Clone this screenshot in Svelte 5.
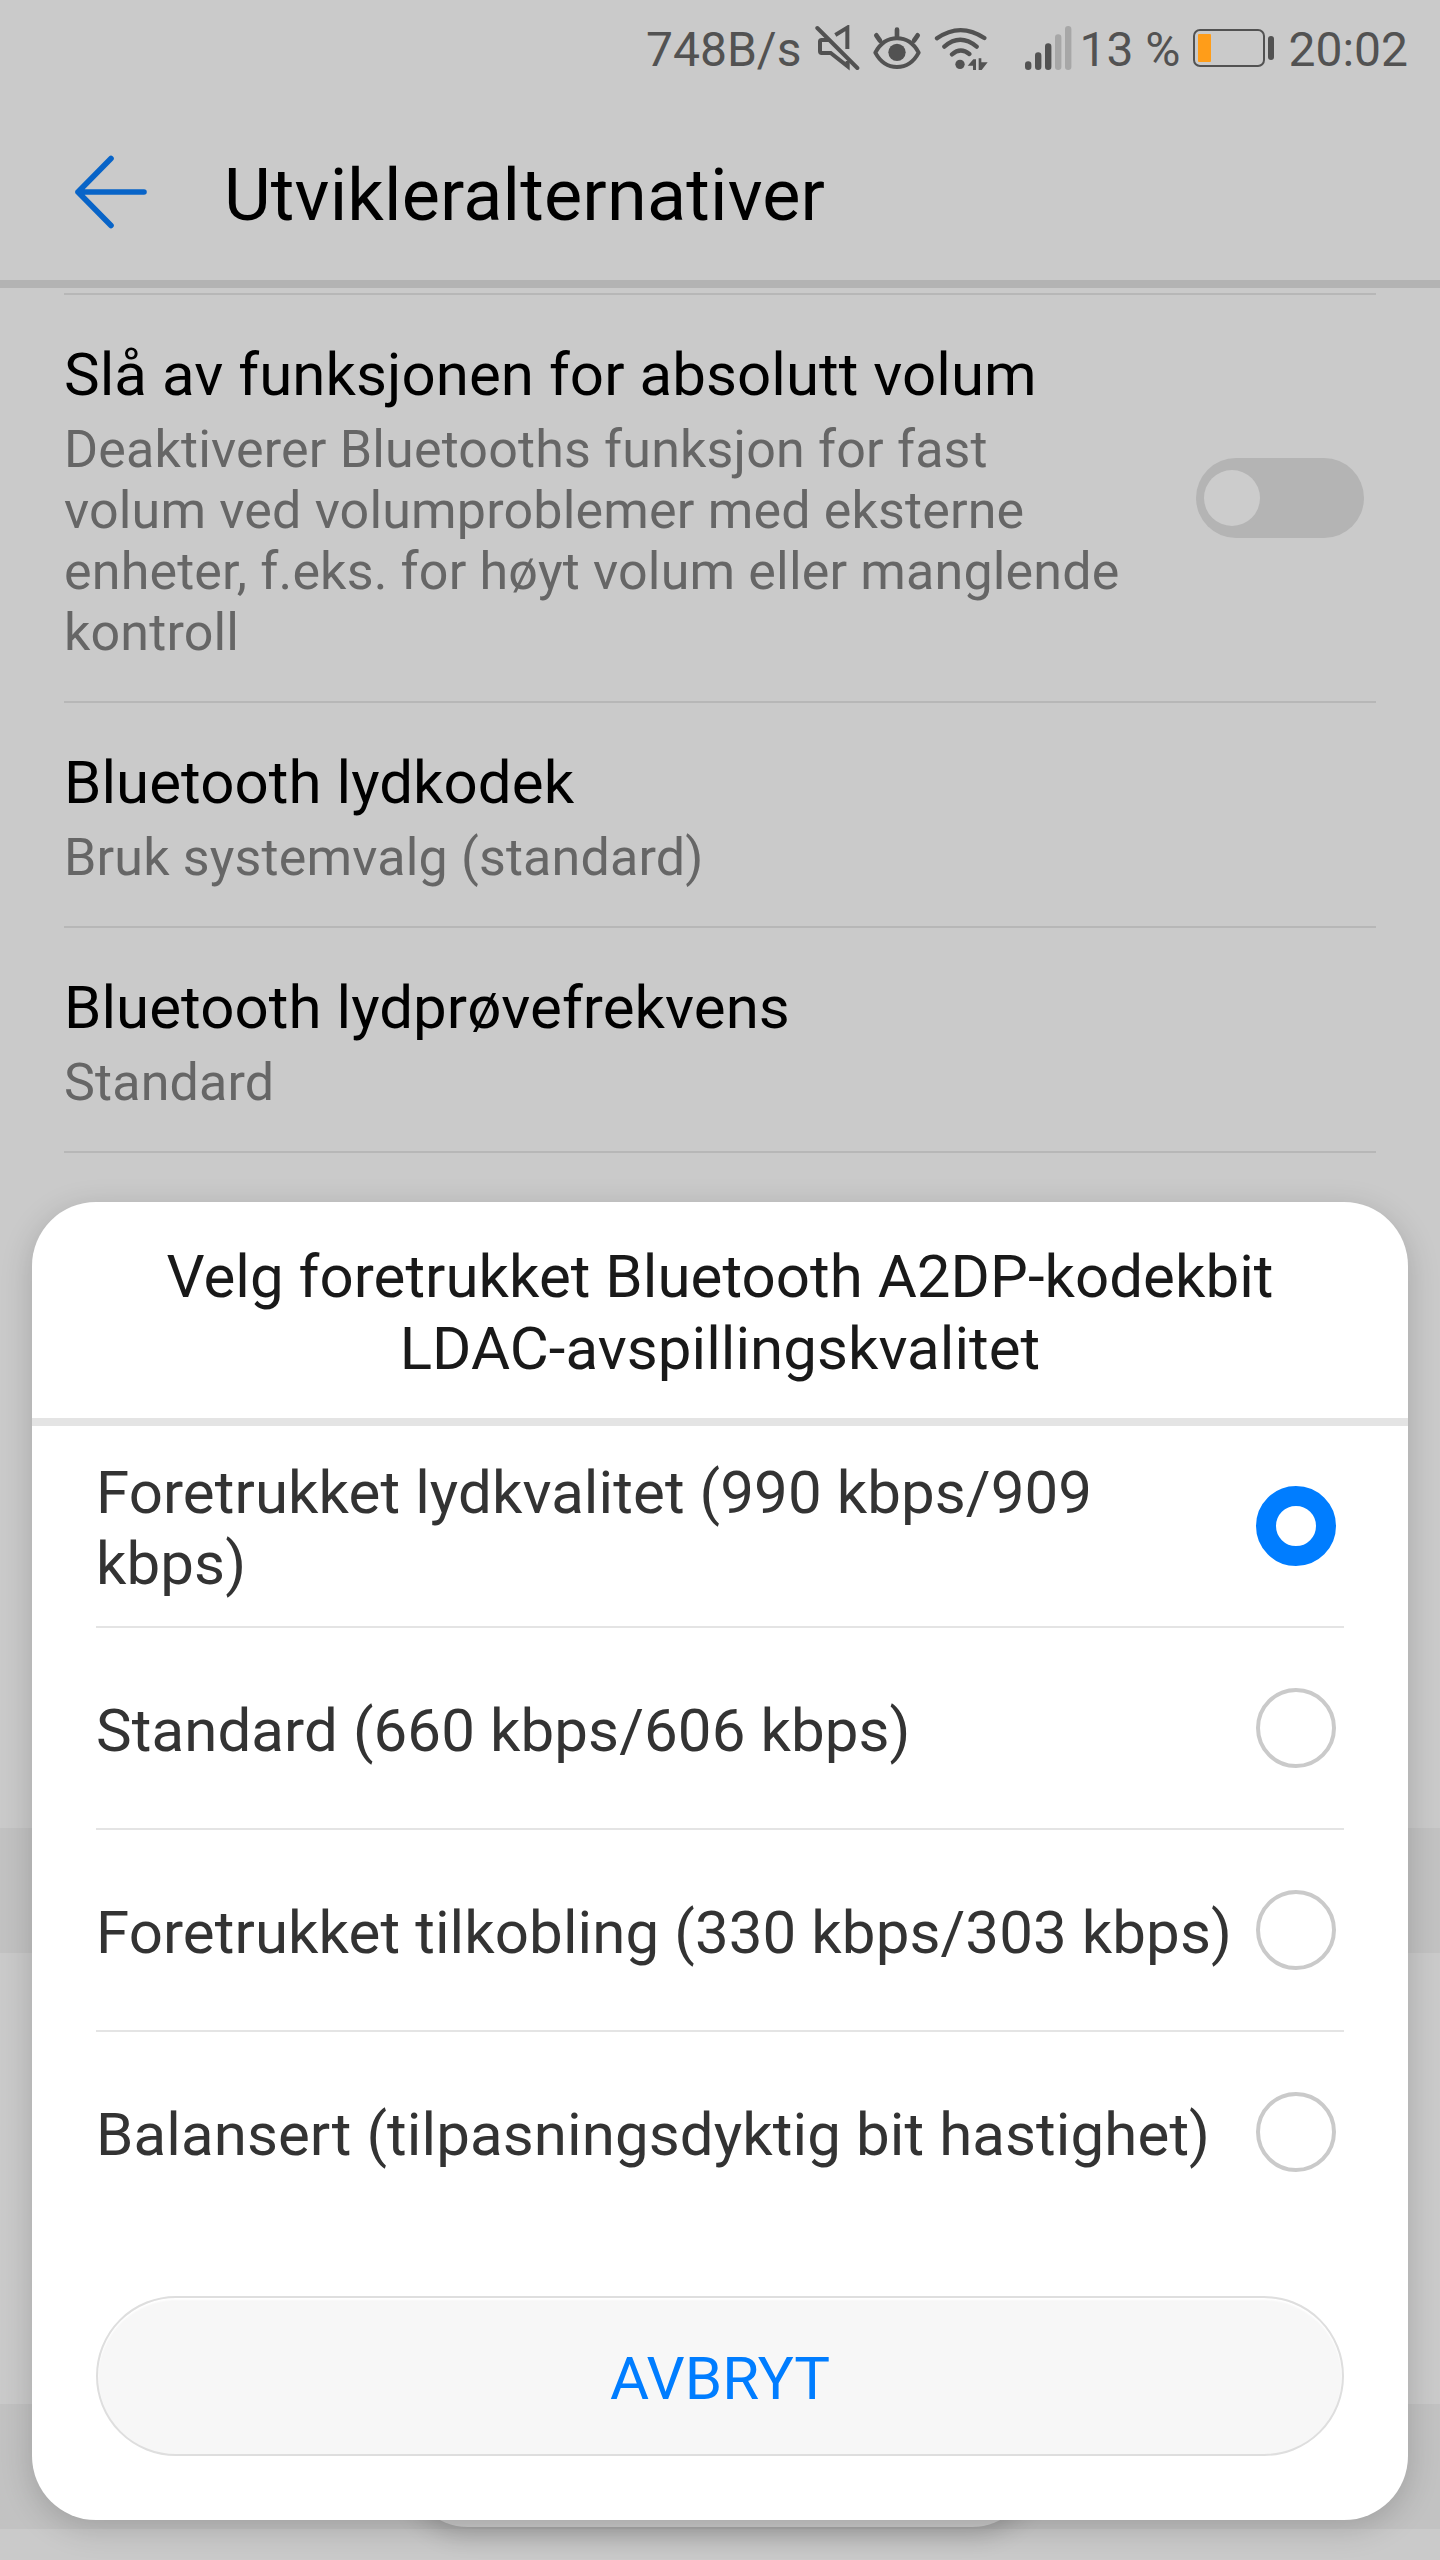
<script lang="ts">
	interface Setting {
		title: string;
		summary: string;
		toggle?: boolean;
	}

	const settings: Setting[] = [
		{
			title: 'Slå av funksjonen for absolutt volum',
			summary:
				'Deaktiverer Bluetooths funksjon for fast volum ved volumproblemer med eksterne enheter, f.eks. for høyt volum eller manglende kontroll',
			toggle: true
		},
		{ title: 'Bluetooth lydkodek', summary: 'Bruk systemvalg (standard)' },
		{ title: 'Bluetooth lydprøvefrekvens', summary: 'Standard' }
	];

	const options: string[] = [
		'Foretrukket lydkvalitet (990 kbps/909 kbps)',
		'Standard (660 kbps/606 kbps)',
		'Foretrukket tilkobling (330 kbps/303 kbps)',
		'Balansert (tilpasningsdyktig bit hastighet)'
	];

	let selected = 0;
	let absoluteVolumeOff = false;
</script>

<div class="screen">
	<div class="status-bar">
		<span class="speed">748B/s</span>
		<svg class="mute" width="46" height="46" viewBox="0 0 138 138" fill="none" stroke="#525252" stroke-width="12">
			<path d="M48 45H23q-5 0-5 5v29q0 5 5 5h27l51 40V108" />
			<path d="M64 30 100 8V72" />
			<path d="M10 9 130 129" stroke-linecap="round" />
		</svg>
		<svg class="eye" width="48" height="44" viewBox="0 0 144 132" fill="none" stroke="#525252" stroke-width="12" stroke-linecap="round">
			<path d="M7 80Q30 37 72 37T137 80Q114 123 72 123T7 80Z" stroke-linejoin="round" />
			<circle cx="72" cy="79" r="26" fill="#525252" stroke="none" />
			<path d="M72 11V32M10 28 21 44M134 28 123 44" stroke-width="14" />
		</svg>
		<svg class="wifi" width="54" height="44" viewBox="0 0 162 132" fill="none" stroke="#525252" stroke-width="13" stroke-linecap="round">
			<path d="M9 37Q78-12 151 36M31 62Q78 21 128 62M54 85Q80 63 106 84" />
			<circle cx="78" cy="115" r="14" fill="#525252" stroke="none" />
			<path d="M101 119 118 100H126V132H117V119ZM134 97H142V109H161L143 132H134Z" fill="#525252" stroke="none" />
		</svg>
		<svg class="signal" width="48" height="44" viewBox="0 0 48 44" stroke-width="6.4" stroke-linecap="round">
			<path d="M4.2 38.5V40.8M14.2 29.5V40.8M24.2 20.5V40.8" stroke="#525252" />
			<path d="M34.2 11.5V40.8M44.2 3.2V40.8" stroke="#a7a7a7" />
		</svg>
		<span class="percent">13 %</span>
		<div class="battery"><div class="level"></div></div>
		<div class="battery-tip"></div>
		<span class="clock">20:02</span>
	</div>

	<header class="app-bar">
		<svg width="74" height="74" viewBox="0 0 74 74" fill="none" stroke="#0864c8" stroke-width="5.6" stroke-linecap="round" stroke-linejoin="round">
			<path d="M37 3.5 4 37 37 70.5M4 37H70" />
		</svg>
		<h1>Utvikleralternativer</h1>
	</header>

	<main class="settings">
		{#each settings as setting}
			<section class="setting">
				<div class="text">
					<h2>{setting.title}</h2>
					<p>{setting.summary}</p>
				</div>
				{#if setting.toggle}
					<button
						class="toggle"
						class:on={absoluteVolumeOff}
						aria-label={setting.title}
						on:click={() => (absoluteVolumeOff = !absoluteVolumeOff)}
					>
						<span class="knob"></span>
					</button>
				{/if}
			</section>
		{/each}
	</main>

	<div class="backdrop">
		<div class="band"></div>
		<div class="gap"></div>
		<div class="band"></div>
	</div>
	<div class="toast"></div>

	<div class="dialog" role="dialog" aria-labelledby="dialog-title">
		<h2 class="dialog-title" id="dialog-title">Velg foretrukket Bluetooth A2DP-kodekbit LDAC-avspillingskvalitet</h2>
		<div class="options">
			{#each options as option, i}
				<button class="option" on:click={() => (selected = i)}>
					<span class="label">{option}</span>
					<span class="radio" class:checked={selected === i}></span>
				</button>
			{/each}
		</div>
		<button class="cancel">AVBRYT</button>
	</div>
</div>

<style>
	:global(body) {
		margin: 0;
	}

	.screen {
		position: relative;
		width: 1440px;
		height: 2560px;
		overflow: hidden;
		background: #cacaca;
		font-family: Roboto, sans-serif;
		color: #000;
	}

	h1,
	h2,
	p {
		margin: 0;
		font-weight: 400;
	}

	button {
		border: none;
		padding: 0;
		font-family: inherit;
	}

	.status-bar {
		display: flex;
		align-items: center;
		justify-content: flex-end;
		box-sizing: border-box;
		height: 96px;
		padding-right: 32px;
		font-size: 48px;
		color: #525252;
		white-space: nowrap;
	}

	.status-bar span {
		padding-top: 3px;
	}

	.status-bar svg {
		flex-shrink: 0;
	}

	.mute {
		margin-left: 13px;
	}

	.eye {
		margin-left: 13px;
	}

	.wifi {
		margin-left: 13px;
	}

	.signal {
		margin-left: 36px;
	}

	.percent {
		margin-left: 7px;
	}

	.battery {
		box-sizing: border-box;
		width: 72px;
		height: 38px;
		margin-left: 13px;
		padding: 3px;
		border: 2px solid #525252;
		border-radius: 7px;
	}

	.level {
		width: 13px;
		height: 28px;
		border-radius: 1px;
		background: #ff9d19;
	}

	.battery-tip {
		width: 6px;
		height: 24px;
		margin: 0 14px 0 3px;
		border-radius: 3px;
		background: #525252;
	}

	.app-bar {
		display: flex;
		align-items: center;
		box-sizing: border-box;
		height: 192px;
		padding: 7px 0 0 74px;
		border-bottom: 8px solid #b3b3b3;
	}

	h1 {
		margin: 8px 0 0 76px;
		font-size: 72px;
		letter-spacing: 0.18px;
	}

	.settings {
		margin: 5px 64px 0;
		border-top: 2px solid #b7b7b7;
	}

	.setting {
		display: flex;
		align-items: center;
		justify-content: space-between;
		padding-right: 12px;
		border-bottom: 2px solid #b7b7b7;
	}

	.text {
		width: 1070px;
		padding: 45px 0 38px;
	}

	.setting h2 {
		font-size: 60px;
		line-height: 70px;
		letter-spacing: 0.06px;
		white-space: nowrap;
	}

	.setting p {
		margin-top: 9px;
		font-size: 52px;
		line-height: 61px;
		letter-spacing: 0.17px;
		color: #666;
	}

	.toggle {
		box-sizing: border-box;
		width: 168px;
		height: 80px;
		padding: 0 8px;
		border-radius: 40px;
		background: #b4b4b4;
		text-align: left;
	}

	.toggle.on {
		text-align: right;
	}

	.knob {
		display: inline-block;
		width: 56px;
		height: 56px;
		border-radius: 50%;
		background: #cccccc;
		vertical-align: middle;
	}

	/* list content that continues behind the dialog */
	.backdrop {
		position: absolute;
		top: 1828px;
		left: 0;
		right: 0;
	}

	.band {
		height: 125px;
		background: #c2c2c2;
	}

	.gap {
		height: 451px;
	}

	.toast {
		position: absolute;
		left: 408px;
		top: 2407px;
		width: 624px;
		height: 120px;
		border-radius: 60px;
		background: #cacaca;
		box-shadow: 0 8px 24px rgba(0, 0, 0, 0.18);
	}

	.dialog {
		position: absolute;
		left: 32px;
		top: 1202px;
		box-sizing: border-box;
		width: 1376px;
		height: 1318px;
		border-radius: 64px;
		background: #fff;
		box-shadow: 0 8px 32px rgba(0, 0, 0, 0.18);
	}

	.dialog-title {
		box-sizing: border-box;
		height: 224px;
		padding: 39px 64px 0;
		border-bottom: 8px solid #e4e4e4;
		font-size: 60px;
		line-height: 72px;
		letter-spacing: 0.04px;
		text-align: center;
		color: #191919;
	}

	.options {
		margin: 0 64px;
	}

	.option {
		display: flex;
		align-items: center;
		justify-content: space-between;
		box-sizing: border-box;
		width: 100%;
		height: 202px;
		padding-right: 8px;
		border-bottom: 2px solid #e4e4e4;
		background: none;
		font-size: 60px;
		line-height: 71px;
		letter-spacing: 0.1px;
		text-align: left;
		color: #333;
	}

	.option:last-child {
		border-bottom-color: transparent;
	}

	.label {
		width: 1140px;
		padding-top: 4px;
	}

	.radio {
		flex-shrink: 0;
		box-sizing: border-box;
		width: 80px;
		height: 80px;
		border: 4px solid #cacaca;
		border-radius: 50%;
	}

	.radio.checked {
		border: 20px solid #007dff;
	}

	.cancel {
		display: block;
		box-sizing: border-box;
		width: 1248px;
		height: 160px;
		margin: 62px 64px 0;
		padding-top: 4px;
		border: 2px solid #dedede;
		border-radius: 80px;
		background: #f7f7f7;
		box-shadow: inset 0 2px 2px #fff;
		font-size: 60px;
		color: #007dff;
	}
</style>
